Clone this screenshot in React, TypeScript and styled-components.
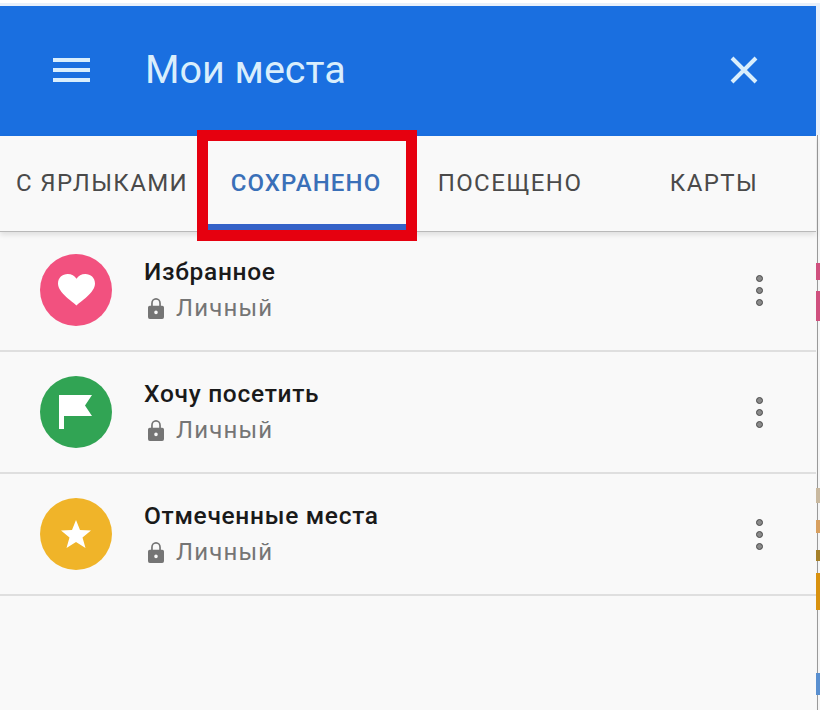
import { createGlobalStyle, styled } from 'styled-components'

const GlobalStyle = createGlobalStyle`
    html, body {
        margin: 0;
        padding: 0;
        background: #ffffff;
        font-family: Roboto, "Liberation Sans", sans-serif;
    }
`

const Page = styled.div`
    width: 820px;
    height: 710px;
    display: flex;
    overflow: hidden;
    background: linear-gradient(#ffffff 3px, #e8f0fa 3px);
    padding-top: 6px;
    box-sizing: border-box;
`

const Panel = styled.div`
    width: 816px;
    display: flex;
    flex-direction: column;
    background: #f9f9f9;
`

const MapEdge = styled.div`
    width: 4px;
    background: linear-gradient(to right, #f6f6f6 1px, #9a9a9a 1px, #9a9a9a 2px, #f6f6f6 2px);
    display: flex;
    flex-direction: column;
`

const EdgePiece = styled.div<{ $h: number; $color: string }>`
    height: ${p => p.$h}px;
    background: ${p => p.$color};
    flex-shrink: 0;
`

const Header = styled.header`
    height: 130px;
    box-sizing: border-box;
    background: #1a6fe0;
    display: flex;
    align-items: center;
    padding: 0 58px 2px 53px;
    color: #d9eefc;
    flex-shrink: 0;
`

const Title = styled.h1`
    flex: 1;
    margin: 0 0 0 55px;
    font-size: 39.5px;
    font-weight: 400;
    line-height: 1;
`

const Tabs = styled.nav`
    height: 96px;
    display: grid;
    grid-template-columns: repeat(4, 204px);
    box-sizing: border-box;
    border-bottom: 1px solid #b9b9b9;
    box-shadow: 0 3px 5px rgba(0, 0, 0, 0.1);
    flex-shrink: 0;
    position: relative;
    z-index: 1;
`

const Tab = styled.div<{ $active?: boolean }>`
    display: flex;
    align-items: center;
    justify-content: center;
    position: relative;
    font-size: 24px;
    font-weight: ${p => (p.$active ? 500 : 400)};
    letter-spacing: ${p => (p.$active ? 1.1 : 1.4)}px;
    white-space: nowrap;
    color: ${p => (p.$active ? '#3a70b8' : '#4a4a4a')};
    padding-bottom: 2px;

    ${p => p.$active && `
        &::before {
            content: '';
            position: absolute;
            left: 4px;
            right: -3px;
            bottom: 1px;
            height: 6px;
            background: #3562c8;
        }
        &::after {
            content: '';
            position: absolute;
            left: -7px;
            right: -9px;
            top: -6px;
            bottom: -10px;
            border: 11px solid #e6000f;
        }
    `}
`

const RowList = styled.div`
    margin-top: -2px;
`

const Row = styled.div`
    height: 122px;
    box-sizing: border-box;
    display: flex;
    align-items: center;
    padding: 0 53px 0 40px;
    border-bottom: 2px solid #dfdfdf;
`

const Badge = styled.div<{ $color: string }>`
    width: 72px;
    height: 72px;
    border-radius: 50%;
    background: ${p => p.$color};
    display: flex;
    align-items: center;
    justify-content: center;
    flex-shrink: 0;
`

const RowText = styled.div`
    flex: 1;
    margin-left: 32px;
`

const RowTitle = styled.div`
    font-size: 24.5px;
    font-weight: 500;
    line-height: 32px;
    letter-spacing: 0.7px;
    color: #1a1a1a;
`

const RowSub = styled.div`
    display: flex;
    align-items: center;
    gap: 12px;
    margin-top: 4px;
    padding-left: 4px;
    font-size: 24px;
    line-height: 32px;
    letter-spacing: 1.2px;
    color: #757575;
`

const Dots = styled.div`
    display: flex;
    flex-direction: column;
    gap: 5px;
`

const Dot = styled.span`
    width: 7px;
    height: 7px;
    box-sizing: border-box;
    border-radius: 50%;
    background: #8a8a8a;
    border: 1.5px solid #4a4a4a;
`

const MenuIcon = () => (
    <svg width="37" height="24" viewBox="0 0 37 24" fill="#d9eefc">
        <rect x="0" y="0" width="37" height="4" />
        <rect x="0" y="10" width="37" height="4" />
        <rect x="0" y="20" width="37" height="4" />
    </svg>
)

const CloseIcon = () => (
    <svg width="28" height="28" viewBox="0 0 28 28" stroke="#d9eefc" strokeWidth="4">
        <path d="M2 2 L26 26 M26 2 L2 26" />
    </svg>
)

const LockIcon = () => (
    <svg width="16" height="21" viewBox="0 0 18 22" preserveAspectRatio="none">
        <path
            fill="#757575"
            fillRule="evenodd"
            d="M2 8h1.500V5.500a5.500 5.500 0 0 1 11 0V8H16a2 2 0 0 1 2 2v10a2 2 0 0 1-2 2H2a2 2 0 0 1-2-2V10a2 2 0 0 1 2-2zM5.400 8h7.200V5.500a3.600 3.600 0 0 0-7.200 0zM9 13a2 2 0 1 0 0 4 2 2 0 0 0 0-4z"
        />
    </svg>
)

const HeartIcon = () => (
    <svg width="37" height="32" viewBox="0 0 38 34" fill="#ffffff" preserveAspectRatio="none">
        <path d="M19 33.500 C15 29 0 20 0 10 C0 4 4.500 0 10 0 C14 0 17 2 19 5 C21 2 24 0 28 0 C33.500 0 38 4 38 10 C38 20 23 29 19 33.500 Z" />
    </svg>
)

const FlagIcon = () => (
    <svg width="34" height="34" viewBox="0 0 34 34" fill="#ffffff">
        <path d="M0 0 H33 L26 10.500 L33 21 H5 V34 H0 Z" />
    </svg>
)

const StarIcon = () => (
    <svg width="30" height="28" viewBox="0 0 30 28" fill="#ffffff">
        <path d="M15 0 L19 10 L30 10.500 L21.500 17.500 L24.500 28 L15 22 L5.500 28 L8.500 17.500 L0 10.500 L11 10 Z" />
    </svg>
)

const places = [
    { title: 'Избранное', color: '#f2517f', icon: <HeartIcon /> },
    { title: 'Хочу посетить', color: '#31a454', icon: <FlagIcon /> },
    { title: 'Отмеченные места', color: '#f0b429', icon: <StarIcon /> },
]

const tabs = ['С ЯРЛЫКАМИ', 'СОХРАНЕНО', 'ПОСЕЩЕНО', 'КАРТЫ']

// what can be seen of the map behind the panel, top to bottom
const edgePieces = [
    { h: 129, color: '#e8f0fa' },
    { h: 128, color: 'transparent' },
    { h: 17, color: '#d0517f' },
    { h: 11, color: 'transparent' },
    { h: 30, color: '#d0517f' },
    { h: 167, color: 'transparent' },
    { h: 15, color: '#c9b9a0' },
    { h: 17, color: 'transparent' },
    { h: 13, color: '#d8a060' },
    { h: 17, color: 'transparent' },
    { h: 11, color: '#a5802a' },
    { h: 12, color: 'transparent' },
    { h: 37, color: '#d9920f' },
    { h: 63, color: 'transparent' },
    { h: 22, color: '#5a90d0' },
]

const App = () => {
    return (
        <Page>
            <GlobalStyle />
            <Panel>
                <Header>
                    <MenuIcon />
                    <Title>Мои места</Title>
                    <CloseIcon />
                </Header>
                <Tabs>
                    {tabs.map((tab, i) => (
                        <Tab key={tab} $active={i === 1}>{tab}</Tab>
                    ))}
                </Tabs>
                <RowList>
                    {places.map(place => (
                        <Row key={place.title}>
                            <Badge $color={place.color}>{place.icon}</Badge>
                            <RowText>
                                <RowTitle>{place.title}</RowTitle>
                                <RowSub><LockIcon />Личный</RowSub>
                            </RowText>
                            <Dots><Dot /><Dot /><Dot /></Dots>
                        </Row>
                    ))}
                </RowList>
            </Panel>
            <MapEdge>
                {edgePieces.map((piece, i) => (
                    <EdgePiece key={i} $h={piece.h} $color={piece.color} />
                ))}
            </MapEdge>
        </Page>
    )
}

export default App
